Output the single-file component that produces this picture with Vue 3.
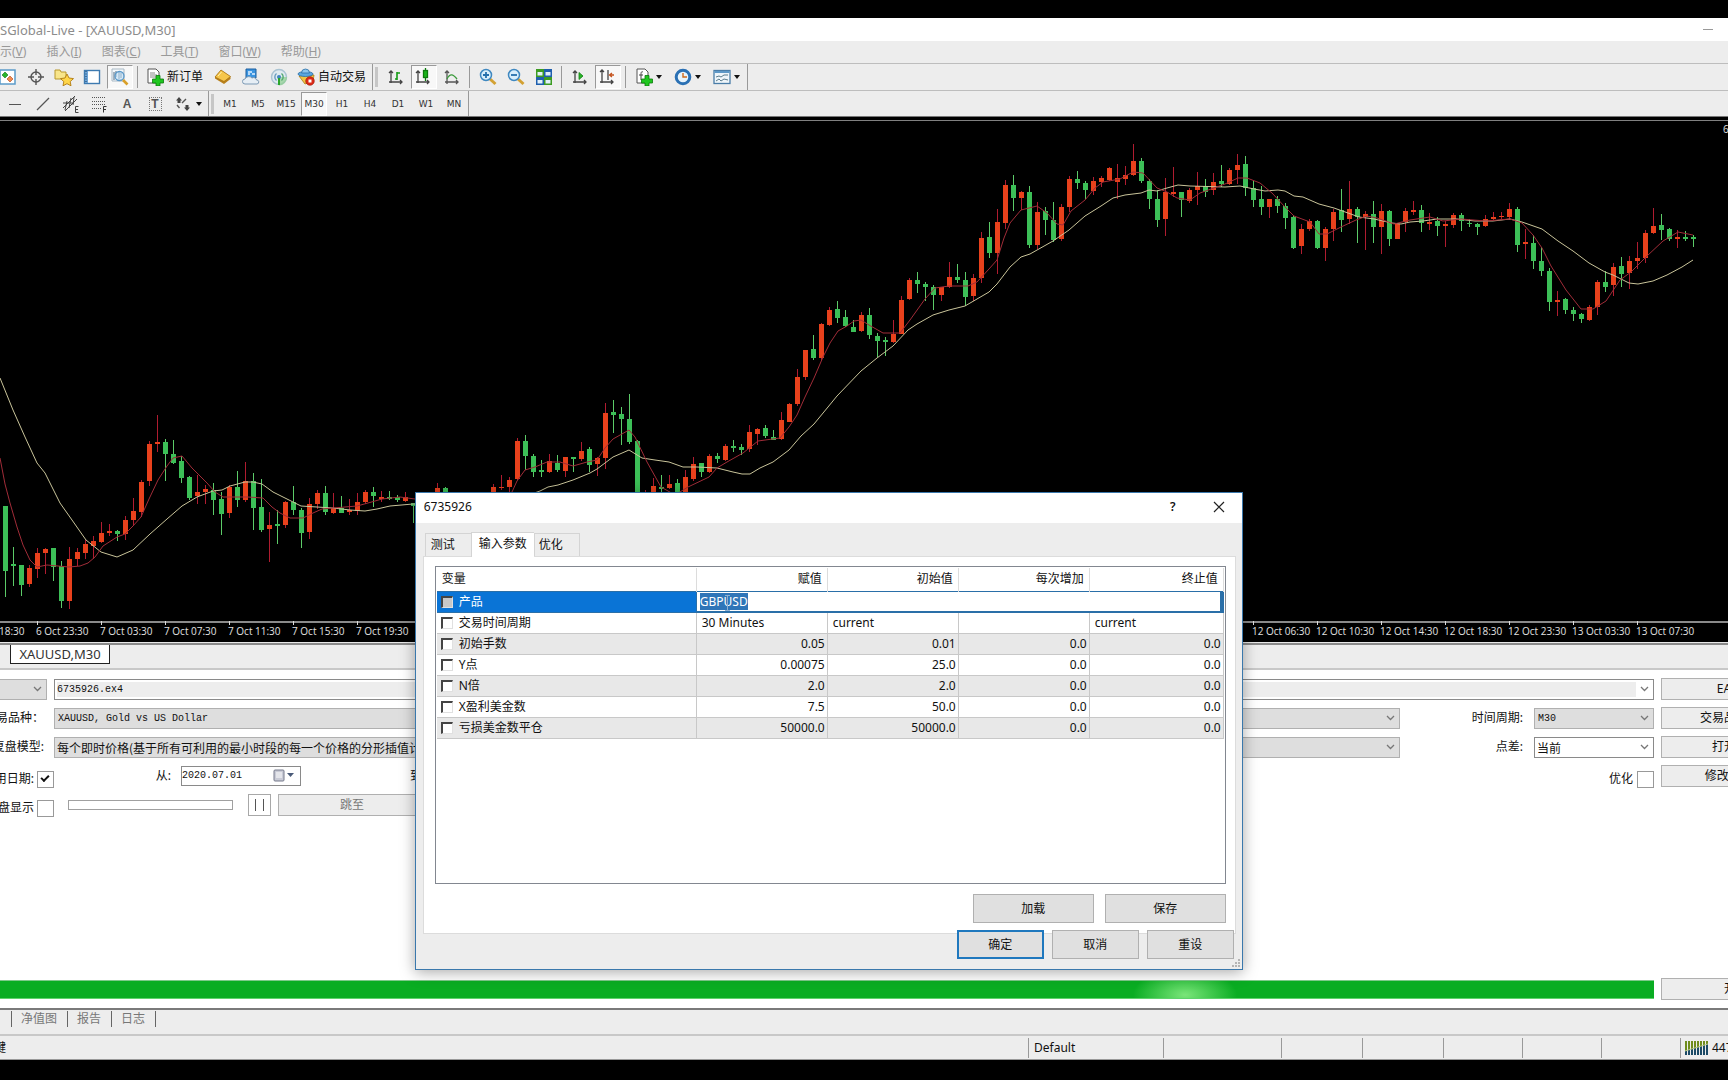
<script setup>
import { onMounted, ref } from 'vue'

const menus = [
  ['显示', 'V'],
  ['插入', 'I'],
  ['图表', 'C'],
  ['工具', 'T'],
  ['窗口', 'W'],
  ['帮助', 'H'],
]
const periods = ['M1', 'M5', 'M15', 'M30', 'H1', 'H4', 'D1', 'W1', 'MN']

/* One entry per bar: direction, wick top, body top, body bottom, wick bottom. "-" is a bar without data. */
const series = `
g506,506,571,597 g547,564,566,586 g565,565,585,596 r565,568,584,587 r548,553,569,578 r548,549,553,574 g548,548,567,581
g561,566,601,608 r547,559,601,609 r548,552,559,566 r540,544,553,559 r536,541,546,559 r522,533,542,543 r524,531,533,536
g530,531,534,541 r516,520,534,540 r498,511,520,526 r480,482,512,517 r441,444,481,486 r415,442,444,452 g439,442,454,481
g440,454,463,464 g456,461,478,483 g476,477,498,500 r475,492,496,504 r485,489,492,504 g483,490,500,515 g492,499,514,535
r485,487,513,518 g471,487,500,507 r462,481,500,502 g473,481,508,530 g479,507,530,532 r512,525,529,562 g510,524,526,544
r501,502,525,528 g486,502,510,515 g508,510,533,548 r498,504,532,539 r490,493,504,509 g486,493,512,515 r493,508,513,514
g496,508,513,513 r499,510,512,515 r493,502,511,515 r490,492,502,504 g487,492,496,507 r491,497,499,502 g491,497,499,500
g495,497,500,502 r492,497,501,502 g503,503,506,523 - - r483,488,492,495 g487,488,492,495 - - - - -
r484,487,495,497 r475,487,488,490 r477,480,487,493 r438,441,479,480 g435,441,456,470 g454,456,472,477 g460,470,472,477
r454,461,472,473 g455,463,470,472 r457,457,471,477 g457,457,459,472 r442,451,459,461 g447,449,465,472 r457,458,464,476
r403,413,458,469 g400,412,415,433 g407,414,419,445 g394,419,442,444 g440,441,497,500 r490,492,495,497 r478,486,495,497
g475,487,489,492 r475,484,488,489 g479,483,495,497 r470,477,495,497 r457,464,479,481 g463,463,472,477 r454,456,472,473
g453,456,459,463 r444,446,460,461 g440,446,448,452 g444,447,450,455 r425,432,449,452 r428,429,434,445 g425,428,436,438
g430,437,440,440 r412,420,439,440 r403,404,422,422 r369,377,404,406 r350,350,377,380 g335,349,358,360 r323,324,358,360
r307,310,325,326 g301,309,318,323 g310,317,326,327 g320,327,332,332 r312,315,331,332 g308,315,335,339 g333,336,341,357
g337,340,342,356 r320,334,342,343 r296,300,334,334 r278,280,299,300 g272,280,284,293 g282,284,287,301 g285,287,295,310
r287,287,295,301 r262,277,287,288 g264,277,280,283 g272,280,297,306 r274,278,296,301 r232,238,278,283 g222,237,253,258
r209,222,253,274 r180,185,223,229 g175,185,198,211 r191,192,198,210 g186,192,245,248 r202,212,245,249 g207,211,220,235
g202,220,240,242 r204,207,239,241 r176,179,207,212 g171,179,183,189 g181,183,190,199 r177,181,191,195 r176,178,182,187
r167,168,180,181 r164,178,182,199 r166,175,179,185 r144,161,175,176 g158,161,181,183 g179,181,199,209 g190,199,220,227
r178,192,219,236 r167,192,194,197 g192,192,200,217 r188,190,201,203 r172,186,190,205 g179,186,192,197 r173,182,190,195
g165,181,184,187 r168,170,184,185 r154,165,170,184 g156,164,188,196 g181,188,200,207 g186,199,207,215 r199,199,207,218
g196,199,206,213 g203,206,218,229 g216,217,248,249 r224,229,246,254 r219,221,229,231 g220,221,248,249 r227,229,248,261
r209,212,229,241 g189,210,220,232 r181,209,219,224 g207,209,217,243 r211,214,217,250 g201,214,227,243 r204,211,227,254
g210,211,239,246 r223,224,239,239 r208,211,222,232 r201,210,212,215 g205,210,223,232 r213,222,224,230 g217,221,226,236
r221,224,226,247 r213,215,225,228 g213,215,221,231 g219,223,224,227 g223,224,227,235 r215,219,226,227 r212,217,219,220
r212,216,217,219 r203,209,217,220 g207,209,245,252 r229,242,244,259 g235,243,261,269 g247,261,271,276 g268,271,302,311
r291,300,302,316 g298,299,310,314 g307,310,314,321 g313,314,319,323 r305,307,320,321 r280,282,307,315 g271,282,287,292
r263,267,285,296 g257,266,274,287 r256,261,273,289 r242,258,261,269 r230,233,258,263 r208,226,233,234 g214,225,230,240
g228,229,239,241 r230,237,239,248 g231,237,239,241 g235,237,239,247`

const candles = series
  .trim()
  .split(/\s+/)
  .map((bar, i) => {
    if (bar === '-') return null
    const [high, top, bottom, low] = bar.slice(1).split(',').map(Number)
    return { x: 3 + 8 * i, up: bar[0] === 'r', high, top, bottom, low }
  })
  .filter(Boolean)

const slowAverage =
  '0,378 13,410 25,437 37,463 45,473 60,503 72,520 86,540 101,552 117,557 133,550 150,534 167,519 182,506 197,497 213,491 222,490 230,486 245,482 253,482 262,484 273,492 285,498 301,506 317,507 333,508 350,510 365,511 377,509 390,506 413,504 500,505 540,491 548,487 558,485 573,480 590,473 597,469 613,457 629,450 642,458 655,460 669,462 683,467 697,467 717,468 733,472 742,474 750,474 760,468 773,462 789,450 801,436 814,424 828,407 837,396 861,371 877,358 893,346 908,330 917,324 933,315 949,310 965,306 989,292 997,284 1010,267 1021,257 1030,254 1053,241 1069,230 1085,216 1101,206 1113,198 1125,195 1141,193 1149,190 1157,191 1167,188 1178,185 1190,186 1225,187 1240,186 1254,189 1265,191 1278,190 1285,191 1294,196 1303,197 1319,204 1334,208 1348,213 1359,217 1374,219 1392,223 1401,224 1410,222 1423,221 1437,219 1457,219 1475,221 1493,221 1510,219 1522,222 1542,229 1558,241 1573,251 1589,263 1605,272 1613,275 1629,283 1638,284 1653,281 1667,275 1682,267 1693,260'
const fastAverage =
  '0,458 5,484 10,503 17,527 23,545 30,560 37,567 47,565 69,567 80,566 88,563 95,557 103,546 117,537 125,534 133,526 141,517 149,499 158,480 167,466 173,458 182,456 192,468 207,483 215,492 223,497 248,497 263,498 272,507 280,513 290,518 303,518 313,513 322,509 333,508 357,506 368,503 382,499 400,497 415,499 500,500 512,492 517,481 525,470 535,467 547,462 560,462 573,466 587,462 597,460 605,448 613,439 629,430 635,437 647,462 661,487 675,495 688,487 709,477 717,468 727,462 743,453 758,441 780,438 789,427 797,415 805,397 814,378 823,357 830,343 838,331 847,326 854,321 861,320 869,325 883,333 900,333 910,320 925,299 935,288 949,286 968,286 977,282 989,269 997,260 1004,238 1010,223 1021,210 1037,206 1047,213 1057,224 1063,225 1071,211 1085,200 1095,188 1103,182 1120,179 1133,172 1143,173 1157,188 1167,192 1177,198 1190,200 1200,193 1225,184 1238,178 1247,178 1260,183 1272,193 1285,207 1294,216 1310,222 1319,234 1327,234 1341,227 1356,220 1367,216 1377,218 1394,224 1410,220 1430,217 1443,221 1461,219 1486,221 1510,219 1522,223 1533,235 1542,248 1551,266 1566,290 1581,309 1593,309 1606,301 1620,280 1631,272 1647,256 1663,241 1678,232 1693,235'

const timeMarks = [
  [-28, '6 Oct 18:30'],
  [36, '6 Oct 23:30'],
  [100, '7 Oct 03:30'],
  [164, '7 Oct 07:30'],
  [228, '7 Oct 11:30'],
  [292, '7 Oct 15:30'],
  [356, '7 Oct 19:30'],
  [1252, '12 Oct 06:30'],
  [1316, '12 Oct 10:30'],
  [1380, '12 Oct 14:30'],
  [1444, '12 Oct 18:30'],
  [1508, '12 Oct 23:30'],
  [1572, '13 Oct 03:30'],
  [1636, '13 Oct 07:30'],
]

const params = [
  { name: '交易时间周期', cells: ['30 Minutes', 'current', '', 'current'], text: true },
  { name: '初始手数', cells: ['0.05', '0.01', '0.0', '0.0'] },
  { name: 'Y点', cells: ['0.00075', '25.0', '0.0', '0.0'] },
  { name: 'N倍', cells: ['2.0', '2.0', '0.0', '0.0'] },
  { name: 'X盈利美金数', cells: ['7.5', '50.0', '0.0', '0.0'] },
  { name: '亏损美金数平仓', cells: ['50000.0', '50000.0', '0.0', '0.0'] },
]

const product = ref('GBPUSD')
const productInput = ref(null)
onMounted(() => {
  productInput.value.focus()
  productInput.value.select()
})
</script>

<template>
  <div class="app">
    <header class="titlebar">
      <span>SGlobal-Live - [XAUUSD,M30]</span>
      <button class="minimize" aria-label="最小化"></button>
    </header>

    <nav class="menubar">
      <a v-for="[name, key] in menus" :key="key" href="#">{{ name }}(<u>{{ key }}</u>)</a>
    </nav>

    <div class="toolrow">
      <div class="toolbar first">
        <button class="tool" aria-label="市场报价">
          <svg width="18" height="18" viewBox="0 0 18 18"><rect x="1" y="2" width="15" height="14" fill="#fff" stroke="#5b9bc9" stroke-width="1.5" /><path d="M6 4l3 3-3 3-3-3z" fill="#2ab52a" stroke="#157015" stroke-width=".6" /><path d="M11 8l3 3-3 3-3-3z" fill="#f08a50" stroke="#b04010" stroke-width=".6" /></svg>
        </button>
        <button class="tool" aria-label="数据窗口">
          <svg width="18" height="18" viewBox="0 0 18 18" fill="none" stroke="#555" stroke-width="1.4"><circle cx="9" cy="9" r="5" /><path d="M9 1v6M9 11v6M1 9h6M11 9h6" /></svg>
        </button>
        <button class="tool" aria-label="导航">
          <svg width="20" height="18" viewBox="0 0 20 18"><path d="M1 2h5l1 2h5v7H1z" fill="#f8e58a" stroke="#b8982c" /><path d="M13 6l2 4 4.500.6-3.300 3 .8 4.200-4-2.100-4 2.100.8-4.200-3.300-3 4.500-.6z" fill="#ffd64a" stroke="#b07a10" stroke-width=".9" /></svg>
        </button>
        <button class="tool" aria-label="终端">
          <svg width="18" height="18" viewBox="0 0 18 18"><rect x="1.500" y="2.500" width="15" height="13" fill="#fff" stroke="#3d7ab0" stroke-width="1.400" /><path d="M2 3h3v12H2z" fill="#6da5d8" /><path d="M3 3v12" stroke="#17385e" stroke-dasharray="1 1.500" /></svg>
        </button>
        <button class="tool pressed" aria-label="策略测试">
          <svg width="18" height="18" viewBox="0 0 18 18" fill="none"><path d="M1 1h12v12H1z" fill="#f4f8fb" stroke="#a8b8c4" /><path d="M3 4v8M5 3v6M8 3v8M10 5v5" stroke="#536b80" /><circle cx="8.500" cy="8" r="4.500" fill="#bfe0f7" fill-opacity=".6" stroke="#5a98c8" stroke-width="1.300" /><path d="M12 12l4.500 4.500" stroke="#d9a02a" stroke-width="2.600" /></svg>
        </button>
        <i class="sep"></i>
        <button class="labelled">
          <svg width="18" height="18" viewBox="0 0 18 18"><path d="M2 1h8l3 3v11H2z" fill="#fff" stroke="#555" /><path d="M4 5h5M4 7h7M4 9h7" stroke="#888" /><path d="M10 7.500h4v3.500h3.500v4H14V18h-4v-3H6.500v-4H10z" fill="#1fc61f" stroke="#0b7a0b" stroke-width=".8" /></svg>
          新订单
        </button>
        <button class="tool" aria-label="编辑器">
          <svg width="18" height="18" viewBox="0 0 18 18"><path d="M1 9l6-7 9.500 6.500v2.500L10 16 1 10.500z" fill="#b8801c" /><path d="M1 9l6-7 9.500 6.500-6.500 5z" fill="#f6c64a" stroke="#a06c10" stroke-width=".7" /><path d="M4 8l3.500-4" stroke="#fff1b0" /></svg>
        </button>
        <button class="tool" aria-label="云服务">
          <svg width="18" height="18" viewBox="0 0 18 18"><path d="M4 1h10v9H4z" fill="#3b95e0" stroke="#1d5f9e" /><path d="M6 4h4M6 6h2M10 6h3" stroke="#dff0ff" stroke-width="1.300" /><path d="M3 16a2.500 2.500 0 0 1 0-5 4 3.500 0 0 1 7-1 3 3 0 0 1 4.500 2A2 2 0 0 1 15 16z" fill="#e6eef5" stroke="#7c9ab5" /></svg>
        </button>
        <button class="tool" aria-label="信号">
          <svg width="18" height="18" viewBox="0 0 18 18" fill="none" stroke-width="1.400"><circle cx="9" cy="9" r="7.500" fill="#dfeaf0" stroke="#a9c3d2" /><path d="M9 9v8.500A8 8 0 0 0 17 9z" fill="#8fd08f" fill-opacity=".7" stroke="none" /><circle cx="9" cy="9" r="2" fill="#3f86bd" stroke="none" /><path d="M9 10v7" stroke="#2aa52a" stroke-width="2" /><path d="M6.500 12.500a4.500 4.500 0 0 1 0-7" stroke="#6a9cc0" /><path d="M11.500 12.500a4.500 4.500 0 0 0 0-7" stroke="#52a870" /></svg>
        </button>
        <button class="labelled">
          <svg width="18" height="18" viewBox="0 0 18 18"><path d="M2 8l6 8 8-3 1-6z" fill="#f2c443" stroke="#a97c14" stroke-width=".8" /><ellipse cx="8.500" cy="6" rx="7.500" ry="2.500" fill="#5aa7df" stroke="#2b6da4" stroke-width=".8" /><path d="M4.500 5a4 4 0 0 1 8 0z" fill="#8cc6ee" stroke="#2b6da4" stroke-width=".8" /><circle cx="13" cy="13" r="4.300" fill="#dc2a17" stroke="#9c1408" stroke-width=".6" /><rect x="11.500" y="11.500" width="3" height="3" fill="#fff" /></svg>
          自动交易
        </button>
        <i class="edge"></i><i class="grip"></i>
        <button class="tool" aria-label="柱状图">
          <svg width="18" height="18" viewBox="0 0 18 18" fill="none" stroke="#444" stroke-width="1.300"><path d="M4 3v12M2 5l2-2 2 2M2 14h13M13 12l2 2-2 2" /><path d="M8 11h2M10 4v8M10 5h3" stroke="#159a15" stroke-width="1.600" /></svg>
        </button>
        <button class="tool pressed" aria-label="蜡烛图">
          <svg width="18" height="18" viewBox="0 0 18 18" fill="none" stroke="#444" stroke-width="1.300"><path d="M3 3v12M1 5l2-2 2 2M1 14h13M12 12l2 2-2 2" /><path d="M10.500 0v13" stroke="#0d7a0d" /><rect x="8.500" y="2.500" width="4" height="7" fill="#19b519" stroke="#0d7a0d" /></svg>
        </button>
        <button class="tool" aria-label="折线图">
          <svg width="18" height="18" viewBox="0 0 18 18" fill="none" stroke="#555" stroke-width="1.300"><path d="M4 3v13M2 5l2-2 2 2M2 14h13M13 12l2 2-2 2" /><path d="M4 11c3-6 6-5 10 0" stroke="#3a9a3a" /></svg>
        </button>
        <i class="sep"></i>
        <button class="tool" aria-label="放大">
          <svg width="18" height="18" viewBox="0 0 18 18" fill="none"><path d="M11 11l5.500 5" stroke="#d3a133" stroke-width="3" /><circle cx="7" cy="7" r="5.500" fill="#d9effc" stroke="#3f88c0" stroke-width="1.500" /><path d="M7 4v6M4 7h6" stroke="#2670ad" stroke-width="1.800" /></svg>
        </button>
        <button class="tool" aria-label="缩小">
          <svg width="18" height="18" viewBox="0 0 18 18" fill="none"><path d="M11 11l5.500 5" stroke="#d3a133" stroke-width="3" /><circle cx="7" cy="7" r="5.500" fill="#d9effc" stroke="#3f88c0" stroke-width="1.500" /><path d="M4 7h6" stroke="#2670ad" stroke-width="1.800" /></svg>
        </button>
        <button class="tool" aria-label="平铺窗口">
          <svg width="18" height="18" viewBox="0 0 18 18"><path d="M1 1h8v8H1zM9 9h8v8H9z" fill="#3c9c22" /><path d="M9 1h8v8H9zM1 9h8v8H1z" fill="#1f5fae" /><path d="M2.500 4h5v3.500h-5zM10.500 4h5v3.500h-5zM2.500 12h5v3.500h-5zM10.500 12h5v3.500h-5z" fill="#e3f1fa" /></svg>
        </button>
        <i class="sep"></i>
        <button class="tool" aria-label="自动滚动">
          <svg width="18" height="18" viewBox="0 0 18 18" fill="none" stroke="#444" stroke-width="1.300"><path d="M4 3v12M2 5l2-2 2 2M2 14h13M13 12l2 2-2 2" /><path d="M8 4.500v7l4-3.500z" fill="#28b428" stroke="#128012" stroke-width=".8" /></svg>
        </button>
        <button class="tool pressed" aria-label="图表平移">
          <svg width="18" height="18" viewBox="0 0 18 18" fill="none" stroke="#444" stroke-width="1.300"><path d="M3 2v13M1 4l2-2 2 2M1 14h13M12 12l2 2-2 2M9 2v10" /><path d="M15 7h-4M13 5l-2.500 2L13 9" stroke="#c4521c" /></svg>
        </button>
        <i class="sep"></i>
        <button class="dropper" aria-label="指标">
          <svg width="18" height="18" viewBox="0 0 18 18"><path d="M2 1h8l3 3v11H2z" fill="#fff" stroke="#555" /><path d="M8 4c-2-1-2 1-2 3v5M4 7h4" fill="none" stroke="#444" /><path d="M10 7.500h4v3.500h3.500v4H14V18h-4v-3H6.500v-4H10z" fill="#1fc61f" stroke="#0b7a0b" stroke-width=".8" /></svg><i class="caret"></i>
        </button>
        <button class="dropper" aria-label="周期">
          <svg width="18" height="18" viewBox="0 0 18 18" fill="none"><circle cx="9" cy="9" r="6.800" fill="#e8f4fc" stroke="#2a70b4" stroke-width="3" /><path d="M9 5v4h4" stroke="#d06a1c" stroke-width="1.400" /></svg><i class="caret"></i>
        </button>
        <button class="dropper" aria-label="模板">
          <svg width="18" height="18" viewBox="0 0 18 18" fill="none"><rect x="1" y="2.500" width="16" height="13" fill="#eef5fa" stroke="#4a7da8" stroke-width="1.300" /><path d="M1.500 4h15" stroke="#5d98c7" stroke-width="2" /><path d="M3 9l3-1 2 1 3-2 4 0M3 13l3-2 2 2 3-2 4 1" stroke="#5a7c8c" /></svg><i class="caret"></i>
        </button>
      </div>
    </div>

    <div class="toolrow">
      <div class="toolbar second">
        <button class="tool" aria-label="水平线"><svg width="18" height="18" viewBox="0 0 18 18"><path d="M3 9.500h12" stroke="#555" /></svg></button>
        <button class="tool" aria-label="趋势线"><svg width="18" height="18" viewBox="0 0 18 18"><path d="M3 15L15 3" stroke="#555" stroke-width="1.200" /></svg></button>
        <button class="tool" aria-label="等距通道">
          <svg width="18" height="18" viewBox="0 0 18 18" stroke="#444" fill="none"><path d="M1 13L13 1M3 16L15 4M5 6l-2 9M9 3L7 13M12 2l-1 8M1 8h11" /><path d="M16.500 11.500h-3v6h3M13.500 14.500h2.500" /></svg>
        </button>
        <button class="tool" aria-label="斐波纳契">
          <svg width="18" height="18" viewBox="0 0 18 18" stroke="#555" fill="none"><path d="M2 2.500h14M2 6.500h14M2 9.500h14M2 13.500h9" stroke-dasharray="1 1" /><path d="M13.500 17.500v-6h3M13.500 14.500h2.500" stroke="#333" /></svg>
        </button>
        <button class="tool glyph" aria-label="文字">A</button>
        <button class="tool glyph" aria-label="文字标签"><span class="dotted">T</span></button>
        <button class="dropper arrows" aria-label="箭头">
          <svg width="18" height="18" viewBox="0 0 18 18"><path d="M5 2l3 3.500H6.500V8h-3V5.500H2zM13 16l-3-3.500h1.500V10h3v2.500H16z" fill="#444" /><path d="M3 10l2.500 3M8 8l4-4" stroke="#555" fill="none" stroke-width="1.400" /></svg><i class="caret"></i>
        </button>
        <i class="edge"></i><i class="grip"></i>
        <button v-for="p in periods" :key="p" class="tool period" :class="{ pressed: p === 'M30' }">{{ p }}</button>
      </div>
    </div>

    <main class="chart">
      <svg class="plot" width="100%" height="521">
        <g transform="translate(0 -121)">
          <g shape-rendering="crispEdges">
            <g v-for="c in candles" :key="c.x" :class="c.up ? 'up' : 'down'">
              <rect class="wick" :x="c.x + 2" :y="c.high" width="1" :height="c.low - c.high" />
              <rect class="body" :x="c.x" :y="c.top" width="5" :height="Math.max(c.bottom - c.top, 1)" />
            </g>
          </g>
          <polyline class="slow" :points="slowAverage" />
          <polyline class="fast" :points="fastAverage" />
          <text x="1723" y="133">6735926</text>
          <line class="axis" x1="0" y1="622" x2="100%" y2="622" />
          <g v-for="[x, label] in timeMarks" :key="x">
            <rect class="tick" :x="x + 1" y="621" width="1" height="4" />
            <text :x="x" y="635">{{ label }}</text>
          </g>
        </g>
      </svg>
    </main>

    <div class="charttabs">
      <button class="charttab">XAUUSD,M30</button>
    </div>

    <section class="tester">
      <div class="row">
        <div class="combo gray kind">
          <select aria-label="类型"><option></option></select>
          <svg width="9" height="6" viewBox="0 0 9 6"><path d="M1 1l3.500 3.500L8 1" /></svg>
        </div>
        <div class="combo wide expert">
          <select aria-label="EA"><option>6735926.ex4</option></select>
          <svg width="9" height="6" viewBox="0 0 9 6"><path d="M1 1l3.500 3.500L8 1" /></svg>
        </div>
        <div class="side"><button class="push">EA属性</button></div>
      </div>
      <div class="row">
        <label class="lead" for="symbol">交易品种：</label>
        <div class="combo gray wide">
          <select id="symbol"><option>XAUUSD, Gold vs US Dollar</option></select>
          <svg width="9" height="6" viewBox="0 0 9 6"><path d="M1 1l3.500 3.500L8 1" /></svg>
        </div>
        <label class="mid" for="period">时间周期:</label>
        <div class="combo gray small">
          <select id="period"><option>M30</option></select>
          <svg width="9" height="6" viewBox="0 0 9 6"><path d="M1 1l3.500 3.500L8 1" /></svg>
        </div>
        <div class="side"><button class="push">交易品种属性</button></div>
      </div>
      <div class="row">
        <label class="lead" for="model">复盘模型:</label>
        <div class="combo gray wide">
          <select id="model" class="cjk"><option>每个即时价格(基于所有可利用的最小时段的每一个价格的分形插值计算)</option></select>
          <svg width="9" height="6" viewBox="0 0 9 6"><path d="M1 1l3.500 3.500L8 1" /></svg>
        </div>
        <label class="mid" for="spread">点差:</label>
        <div class="combo small">
          <select id="spread" class="cjk"><option>当前</option></select>
          <svg width="9" height="6" viewBox="0 0 9 6"><path d="M1 1l3.500 3.500L8 1" /></svg>
        </div>
        <div class="side"><button class="push">打开图表</button></div>
      </div>
      <div class="row">
        <label class="lead checklabel" for="usedate">使用日期:</label>
        <input id="usedate" class="check" type="checkbox" checked />
        <label class="from" for="from">从:</label>
        <div class="date">
          <input id="from" type="text" value="2020.07.01" />
          <svg width="22" height="14" viewBox="0 0 22 14"><rect x="1" y="1" width="10" height="11" rx="1" fill="#c9cbd6" stroke="#777b8c" /><path d="M3 4h6M3 6h6M3 8h6" stroke="#fff" /><path d="M14 4h7l-3.500 4z" fill="#4a5a78" /></svg>
        </div>
        <span class="to">到:</span>
        <label class="optlabel" for="opt">优化</label>
        <input id="opt" class="check" type="checkbox" />
        <div class="side"><button class="push">修改EA程序</button></div>
      </div>
      <div class="row">
        <label class="lead checklabel" for="visual">复盘显示</label>
        <input id="visual" class="check" type="checkbox" />
        <div class="speed"></div>
        <button class="pause" aria-label="暂停"><i></i><i></i></button>
        <button class="push skip" disabled>跳至</button>
      </div>

      <div class="row run">
        <div class="progress"></div>
        <div class="side"><button class="push">开始</button></div>
      </div>
    </section>

    <nav class="resulttabs">
      <a href="#">净值图</a><a href="#">报告</a><a href="#">日志</a>
    </nav>

    <footer class="status">
      <span class="help">按F1键</span>
      <span class="cell c1">Default</span>
      <span class="cell c2"></span>
      <span class="cell c3"></span>
      <span class="cell c3"></span>
      <span class="cell c4"></span>
      <span class="cell c4"></span>
      <span class="cell c4"></span>
      <span class="cell c5">
        <svg width="23" height="14" viewBox="0 0 23 14"><g shape-rendering="crispEdges"><path d="M1 0v14M4 0v14M7 0v14M10 0v14M13 0v14M16 0v14M19 0v14M22 0v14" stroke="#6f8c1c" stroke-width="2" /><path d="M1 10v4M4 9v5M7 8v6M10 7v7M13 6v8M16 5v9M19 4v10M22 3v11" stroke="#1b4a66" stroke-width="2" /></g><path d="M0 10L23 3" stroke="#b9c98a" /></svg>
        447
      </span>
    </footer>

    <section class="dialog" role="dialog" aria-label="6735926">
      <header class="dialoghead">
        <span>6735926</span>
        <button class="winbtn" aria-label="帮助">?</button>
        <button class="winbtn" aria-label="关闭"><svg width="12" height="12" viewBox="0 0 12 12"><path d="M1 1l10 10M11 1L1 11" stroke="#222" stroke-width="1.200" /></svg></button>
      </header>
      <div class="dialogbody">
        <div class="tabs">
          <button class="tab">测试</button>
          <button class="tab current">输入参数</button>
          <button class="tab last">优化</button>
        </div>
        <div class="panel">
          <div class="grid">
            <table>
              <colgroup><col /><col class="val" /><col class="val" /><col class="val" /><col class="end" /></colgroup>
              <thead>
                <tr><th>变量</th><th>赋值</th><th>初始值</th><th>每次增加</th><th>终止值</th></tr>
              </thead>
              <tbody>
                <tr class="selected">
                  <td><label><input type="checkbox" />产品</label></td>
                  <td colspan="4" class="edit">
                    <div class="editbox">
                      <input ref="productInput" v-model="product" type="text" aria-label="产品" />
                      <svg class="ibeam" width="5" height="16" viewBox="0 0 5 16"><path d="M0 .5h5M2.500 0v16M0 15.500h5" stroke="#8fb0d0" /></svg>
                    </div>
                  </td>
                </tr>
                <tr v-for="p in params" :key="p.name">
                  <td><label><input type="checkbox" />{{ p.name }}</label></td>
                  <td v-for="(v, i) in p.cells" :key="i" :class="{ words: p.text }">{{ v }}</td>
                </tr>
              </tbody>
            </table>
          </div>
          <div class="actions">
            <button class="push">加载</button>
            <button class="push">保存</button>
          </div>
        </div>
        <div class="confirm">
          <button class="push default">确定</button>
          <button class="push">取消</button>
          <button class="push">重设</button>
        </div>
      </div>
      <svg class="sizer" width="8" height="8" viewBox="0 0 8 8"><path d="M6 0h2v2H6zM3 3h2v2H3zM6 3h2v2H6zM0 6h2v2H0zM3 6h2v2H3zM6 6h2v2H6z" fill="#b4b4b4" /></svg>
    </section>
  </div>
</template>

<style>
body {
  background: #000;
}
</style>

<style scoped>
.app {
  position: relative;
  display: flex;
  flex-direction: column;
  box-sizing: border-box;
  min-height: 100vh;
  padding: 18px 0 20px;
  overflow: hidden;
  background: #000;
  color: #111;
  font: 12px/16px 'Noto Sans', 'Noto Sans CJK SC', sans-serif;
}
.app *,
.app *::before {
  box-sizing: border-box;
}
button,
input,
select {
  margin: 0;
  padding: 0;
  border: 0;
  border-radius: 0;
  background: none;
  color: inherit;
  font: inherit;
  appearance: none;
  outline: none;
}
a {
  color: inherit;
  text-decoration: none;
}
svg {
  flex: none;
}

.titlebar {
  display: flex;
  align-items: center;
  justify-content: space-between;
  height: 23px;
  padding-right: 15px;
  background: #fff;
  color: #8c8c8c;
  font-size: 13px;
}
.minimize {
  width: 10px;
  height: 1px;
  background: #999;
}
.menubar {
  display: flex;
  align-items: center;
  gap: 20px;
  height: 22px;
  margin: 0;
  padding-bottom: 1px;
  background: #ededed;
  color: #999;
}
.menubar a {
  white-space: nowrap;
}
.menubar a:first-child {
  margin-left: -12px;
}

.toolrow {
  display: flex;
  background: #ededed;
  border-top: 1px solid #bdbdbd;
}
.toolbar {
  display: flex;
  align-items: center;
  height: 26px;
  border-right: 1px solid #999;
}
.toolbar.second {
  height: 25px;
}
.tool {
  display: flex;
  align-items: center;
  justify-content: center;
  width: 28px;
  height: 24px;
}
.first .tool:first-child {
  margin-left: -6px;
}
.pressed {
  width: 26px;
  margin: 0 1px;
  background: #f8f8f8;
  border: 1px solid #fff;
  border-top-color: #999;
  border-left-color: #999;
}
.labelled {
  display: flex;
  align-items: center;
  gap: 3px;
  height: 24px;
  padding: 0 6px 0 4px;
  white-space: nowrap;
}
.sep,
.edge {
  width: 1px;
  height: 22px;
  background: #999;
}
.sep {
  margin: 0 4px 0 3px;
}
.edge {
  height: 100%;
}
.grip {
  width: 3px;
  height: 20px;
  margin: 0 3px 0 2px;
  background: #c6c6c6;
}
.first .grip {
  margin-right: 4px;
}
.second .grip {
  margin-right: 2px;
}
.dropper {
  display: flex;
  align-items: center;
  gap: 3px;
  width: 39px;
  height: 24px;
  padding-left: 5px;
}
.caret {
  border: 3px solid transparent;
  border-top: 4px solid #111;
  border-bottom: 0;
}
.second .tool:first-child {
  margin-left: 1px;
}
.arrows {
  gap: 4px;
}
.glyph {
  font: bold 12px/16px 'Liberation Sans', sans-serif;
  color: #555;
}
.dotted {
  width: 13px;
  height: 14px;
  border: 1px dotted #777;
  line-height: 13px;
}
.period {
  color: #333;
  font: 9px/16px 'DejaVu Sans', sans-serif;
}

.chart {
  padding-top: 3px;
  border-top: 1px solid #777;
  border-bottom: 2px solid #8a8a8a;
  background: #000;
}
.plot {
  display: block;
  border-top: 1px solid #808080;
  border-bottom: 1px solid #e8e8e8;
  box-sizing: content-box;
  overflow: hidden;
}
.plot text {
  fill: #e0e0e0;
  font: 10px 'Open Sans', sans-serif;
}
.up .wick {
  fill: #b01c30;
}
.up .body {
  fill: #e8411c;
}
.down .wick {
  fill: #5ccb68;
}
.down .body {
  fill: #3cbf57;
}
.slow,
.fast {
  fill: none;
  stroke-width: 1;
}
.slow {
  stroke: #c9c49a;
}
.fast {
  stroke: #a02c38;
}
.axis {
  stroke: #8a8a8a;
  stroke-width: 2;
}
.tick {
  fill: #ddd;
}

.charttabs {
  height: 25px;
  padding-left: 10px;
  background: #ededed;
  border-bottom: 2px solid #c8c8c8;
}
.charttab {
  display: block;
  width: 100px;
  height: 19px;
  border: 1px solid #222;
  border-top: 0;
  background: #fff;
  color: #333;
  font-size: 13px;
  line-height: 18px;
}

.tester {
  display: flex;
  flex: 1;
  flex-direction: column;
  gap: 7px;
  padding: 8px 0 8px;
  background: #fff;
}
.row {
  display: flex;
  align-items: center;
  height: 22px;
}
.lead {
  display: flex;
  flex: none;
  justify-content: flex-end;
  width: 54px;
  padding-right: 10px;
  white-space: nowrap;
}
.checklabel {
  width: 37px;
  padding-right: 3px;
}
.combo {
  display: grid;
  grid-template-columns: 1fr 17px;
  align-items: center;
  height: 21px;
  border: 1px solid #8a8a8a;
  background: #fff;
}
.combo select {
  grid-area: 1 / 1 / 2 / 3;
  width: 100%;
  height: 19px;
  padding-left: 3px;
  font: 10px/19px 'Liberation Mono', monospace;
}
.combo select.cjk {
  padding-left: 2px;
  font: 12px/19px 'Noto Sans CJK SC', sans-serif;
}
.combo svg {
  grid-area: 1 / 2 / 2 / 3;
  margin-left: 4px;
  fill: none;
  stroke: #777;
  stroke-width: 1.300;
  pointer-events: none;
}
.gray {
  background: #dedede;
  border-color: #b0b0b0;
}
.wide {
  flex: 1;
  min-width: 0;
}
.kind {
  width: 48px;
  margin: 0 7px 0 -1px;
}
.expert {
  padding: 2px 0 2px 2px;
}
.expert select {
  grid-area: 1 / 1 / 2 / 2;
  height: 15px;
  padding-left: 0;
  background: #ededed;
  line-height: 15px;
}
.mid {
  width: 134px;
  padding-right: 11px;
  text-align: right;
}
.small {
  width: 120px;
}
.side {
  flex: none;
  width: 67px;
  margin-left: 7px;
  overflow: hidden;
}
.push {
  height: 22px;
  border: 1px solid #b0b0b0;
  background: #ededed;
}
.side .push {
  display: block;
  width: 150px;
}
.check {
  position: relative;
  top: 3px;
  flex: none;
  width: 17px;
  height: 17px;
  border: 1px solid #999;
  background: #fff;
}
.check:checked::before {
  content: '';
  display: block;
  width: 8px;
  height: 5px;
  margin: 3px 0 0 3px;
  border: 2px solid #111;
  border-top: 0;
  border-right: 0;
  transform: rotate(-45deg);
}
.checklabel,
.optlabel {
  padding-top: 6px;
}
.optlabel {
  flex: 1;
  padding-right: 4px;
  text-align: right;
}
.from {
  width: 127px;
  padding-right: 10px;
  text-align: right;
}
.date {
  display: flex;
  align-items: center;
  width: 120px;
  height: 20px;
  border: 1px solid #8a8a8a;
  padding-right: 5px;
}
.date input {
  flex: 1;
  width: 60px;
  font: 10px/18px 'Liberation Mono', monospace;
}
.to {
  margin-left: 109px;
}
.speed {
  width: 165px;
  height: 10px;
  margin-left: 14px;
  border: 1px solid #a0a0a0;
}
.pause {
  display: flex;
  align-items: center;
  justify-content: space-evenly;
  width: 23px;
  height: 22px;
  margin: 0 7px 0 15px;
  border: 1px solid #a8a8a8;
}
.pause i {
  width: 1px;
  height: 12px;
  background: #555;
}
.skip {
  width: 148px;
  color: #777;
}
.run {
  margin-top: auto;
}
.progress {
  flex: 1;
  height: 19px;
  background:
    radial-gradient(ellipse 52px 26px at 1185px 14px, rgba(128, 232, 126, 0.95), rgba(10, 173, 34, 0)),
    #0aad22;
  border-top: 1px solid #7fc98a;
  border-bottom: 1px solid #5fd36c;
}

.resulttabs {
  display: flex;
  align-items: center;
  height: 28px;
  padding: 0 0 6px 11px;
  border-top: 2px solid #7a7a7a;
  border-bottom: 2px solid #c8c8c8;
  background: #ededed;
  color: #777;
}
.resulttabs a {
  padding: 0 10px 0 9px;
  border-left: 1px solid #666;
}
.resulttabs a:last-child {
  border-right: 1px solid #666;
}
.status {
  display: flex;
  align-items: center;
  height: 24px;
  padding-top: 1px;
  border-bottom: 1px solid #999;
  background: #ededed;
}
.help {
  flex: 1;
  margin-left: -31px;
}
.cell {
  display: flex;
  flex: none;
  align-items: center;
  gap: 4px;
  height: 20px;
  padding-left: 5px;
  border-left: 1px solid #999;
}
.c1 {
  width: 135px;
}
.c2 {
  width: 118px;
}
.c3 {
  width: 81px;
}
.c4 {
  width: 79px;
}
.c5 {
  width: 48px;
  padding-left: 4px;
  overflow: hidden;
}

.dialog {
  position: absolute;
  top: 492px;
  left: 24%;
  width: 828px;
  border: 1px solid #3a78ac;
  background: #ededed;
  box-shadow: 0 2px 14px rgba(0, 0, 0, 0.35);
}
.dialoghead {
  display: flex;
  align-items: center;
  height: 30px;
  padding: 0 0 2px 8px;
  background: #fff;
}
.dialoghead span {
  flex: 1;
}
.winbtn {
  display: flex;
  align-items: center;
  justify-content: center;
  width: 46px;
  height: 28px;
  font-weight: 600;
}
.dialogbody {
  padding: 9px 6px 10px 7px;
}
.tabs {
  display: flex;
  align-items: flex-end;
  height: 24px;
  padding-left: 2px;
}
.tab {
  width: 46px;
  height: 23px;
  padding: 0 5px;
  border: 1px solid #d4d4d4;
  border-bottom: 0;
  border-right: 0;
  text-align: left;
}
.tab.current {
  z-index: 1;
  width: 63px;
  height: 25px;
  margin-bottom: -1px;
  padding: 0 7px 3px;
  background: #fff;
}
.tab.last {
  padding: 0 4px;
  border-right: 1px solid #d4d4d4;
}
.panel {
  height: 378px;
  padding: 9px 9px 0 11px;
  border: 1px solid #dcdcdc;
  background: #fff;
}
.grid {
  height: 318px;
  padding: 1px;
  border: 1px solid #828790;
}
table {
  width: 100%;
  border-collapse: collapse;
  table-layout: fixed;
}
.val {
  width: 131px;
}
.end {
  width: 134px;
}
th {
  height: 23px;
  padding: 0 5px;
  border-right: 1px solid #dcdcdc;
  font-weight: normal;
  text-align: right;
}
th:first-child {
  text-align: left;
}
td {
  height: 21px;
  padding: 0 2px;
  border: 1px solid #c8c8c8;
  border-left-width: 0;
  text-align: right;
  white-space: nowrap;
}
td:first-child {
  padding-left: 4px;
  text-align: left;
}
tbody tr:nth-child(odd) td {
  background: #e8e8e8;
}
tbody tr.selected td {
  border-color: #2a6fa8;
  background: #0a74d6;
  color: #fff;
}
td.words {
  padding-left: 5px;
  text-align: left;
}
td label {
  display: flex;
  align-items: center;
  gap: 6px;
  line-height: 16px;
}
td label input {
  width: 12px;
  height: 12px;
  border: 1px solid #e0e0e0;
  border-top: 2px solid #444;
  border-left: 2px solid #444;
  background: #fff;
}
.selected label input {
  background: #c8c8c8;
}
tbody tr.selected td.edit {
  padding: 0 3px 0 0;
  background: #2a6fa8;
}
.editbox {
  position: relative;
  height: 19px;
  padding-left: 2px;
  background: #fff;
}
.editbox input {
  display: block;
  width: 100%;
  height: 19px;
  padding-left: 1px;
  color: #111;
}
.editbox input::selection {
  background: #2f75b8;
  color: #fff;
}
.ibeam {
  position: absolute;
  top: 3px;
  left: 28px;
  pointer-events: none;
}
.actions {
  display: flex;
  justify-content: flex-end;
  gap: 11px;
  padding-top: 10px;
}
.actions .push,
.confirm .push {
  height: 29px;
  background: #e0e0e0;
}
.actions .push {
  width: 121px;
}
.confirm {
  display: flex;
  justify-content: flex-end;
  gap: 8px;
  margin-top: -4px;
  padding-right: 2px;
}
.confirm .push {
  width: 87px;
}
.confirm .default {
  border: 2px solid #1f78be;
}
.sizer {
  position: absolute;
  right: 2px;
  bottom: 2px;
}
</style>
